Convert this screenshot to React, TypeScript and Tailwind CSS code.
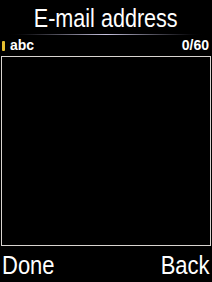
export default function App() {
  const font = { fontFamily: '"Liberation Sans", Arial, sans-serif' };

  return (
    <div className="w-[212px] h-[282px] bg-black text-white flex flex-col overflow-hidden" style={font}>
      {/* Title */}
      <div className="h-[34px] flex items-center justify-center">
        <span className="inline-block text-[26px] leading-none pt-[1px] scale-x-[0.83] whitespace-nowrap">E-mail address</span>
      </div>
      <div className="h-[1px] bg-gradient-to-r from-black via-[#c8c4e0] to-black mx-[4px]" />

      {/* Input status row */}
      <div className="h-[21px] flex items-center justify-between pl-[2px] pr-[3px] text-[14px] font-bold">
        <div className="flex items-center gap-[5px]">
          <div className="w-[3px] h-[10px] rounded-[1px] bg-[#e8c030]" />
          <span>abc</span>
        </div>
        <span>0/60</span>
      </div>

      {/* Text box */}
      <div className="mx-[1px] h-[190px] border border-[#d8d4d0] bg-black" />

      {/* Softkeys */}
      <div className="flex-1 flex items-center justify-between px-[2px] text-[25px] leading-none pt-[2px]">
        <span className="inline-block origin-left scale-x-[0.88]">Done</span>
        <span className="inline-block origin-right scale-x-[0.88]">Back</span>
      </div>
    </div>
  );
}
